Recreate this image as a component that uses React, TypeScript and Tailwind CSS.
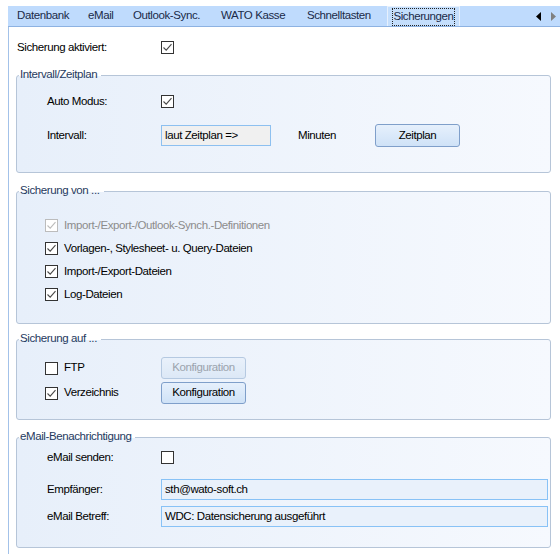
import React from "react";

function Check({ checked, disabled }: { checked?: boolean; disabled?: boolean }) {
  return (
    <span
      className={
        disabled
          ? "w-[13px] h-[13px] border border-[#bcbcbc] bg-white flex items-center justify-center shrink-0"
          : "w-[13px] h-[13px] border border-[#333333] bg-white flex items-center justify-center shrink-0"
      }
    >
      {checked && (
        <svg width="11" height="11" viewBox="0 0 11 11">
          <path
            d="M1.5 5.5 L4.2 8.2 L9.5 2.2"
            fill="none"
            stroke={disabled ? "#bcbcbc" : "#4a4a4a"}
            strokeWidth="1.1"
          />
        </svg>
      )}
    </span>
  );
}

function Button({ label, disabled, w }: { label: string; disabled?: boolean; w: string }) {
  return (
    <div
      className={
        (disabled
          ? "border-[#b5c9e1] bg-linear-to-b from-[#e9f1fb] to-[#dce8f6] text-[#9ba3ad] "
          : "border-[#7f9fca] bg-linear-to-b from-[#e6f0fc] to-[#cfe2f7] text-[#000000] ") +
        w +
        " h-full border rounded-[3px] flex items-center justify-center"
      }
    >
      {label}
    </div>
  );
}

function Tab({ label, w }: { label: string; w: string }) {
  return <div className={w + " flex items-center pl-[9px] text-[#1a2a48] whitespace-nowrap"}>{label}</div>;
}

export default function App() {
  return (
    <div className="w-[560px] h-[554px] bg-white overflow-hidden text-[11.5px] tracking-[-0.4px] text-[#000000] font-['Liberation_Sans',Arial,sans-serif]">
      <div className="pt-[6px] pl-[8px]">
        {/* tab strip */}
        <div className="h-[21px] bg-[#bfdbfd] border-b border-[#8db2e2] flex items-stretch">
          <Tab label="Datenbank" w="w-[71px]" />
          <Tab label="eMail" w="w-[45px]" />
          <Tab label="Outlook-Sync." w="w-[88px]" />
          <Tab label="WATO Kasse" w="w-[86px]" />
          <Tab label="Schnelltasten" w="w-[89px]" />
          <div className="w-[73px] border-l border-t border-r border-[#e6f0fd] bg-[#c4defc] flex items-stretch pt-[1px]">
            <div className="mx-[4px] flex-1 border border-dotted border-[#222222] flex items-center justify-center text-[#1a2a48]">
              Sicherungen
            </div>
          </div>
          <div className="ml-[76px] flex items-center gap-[10px]">
            <svg width="5" height="9" viewBox="0 0 5 9">
              <path d="M5 0 L0 4.5 L5 9 Z" fill="#000000" />
            </svg>
            <svg width="5" height="9" viewBox="0 0 5 9">
              <path d="M0 0 L5 4.5 L0 9 Z" fill="#808080" />
            </svg>
          </div>
        </div>

        {/* tab page */}
        <div className="h-[527px] border-l border-[#a3c2e9] pt-[14px]">
          <div className="h-[13px] flex items-center pl-[8px]">
            <span className="w-[144px]">Sicherung aktiviert:</span>
            <Check checked />
          </div>

          {/* Intervall/Zeitplan */}
          <fieldset className="mt-[13px] ml-[7px] w-[535px] h-[106px] min-w-0 border border-[#b6c5d8] rounded-[3px] bg-linear-to-r from-[#e7effa] to-[#f6f9fe]">
            <legend className="ml-[2px] pl-[1px] pr-[4px] pb-[3px] leading-[14px] text-[#1f3a60]">Intervall/Zeitplan</legend>
            <div className="pt-[11px] pl-[30px]">
              <div className="h-[13px] flex items-center">
                <span className="w-[114px]">Auto Modus:</span>
                <Check checked />
              </div>
              <div className="mt-[16px] h-[23px] flex items-center">
                <span className="w-[114px]">Intervall:</span>
                <div className="w-[110px] h-[21px] border border-[#8dc0f0] bg-[#f0f0f0] flex items-center pl-[3px]">
                  laut Zeitplan =&gt;
                </div>
                <span className="ml-[27px] w-[77px]">Minuten</span>
                <Button label="Zeitplan" w="w-[85px]" />
              </div>
            </div>
          </fieldset>

          {/* Sicherung von */}
          <fieldset className="mt-[10px] ml-[7px] w-[535px] h-[141px] min-w-0 border border-[#b6c5d8] rounded-[3px] bg-linear-to-r from-[#e7effa] to-[#f6f9fe]">
            <legend className="ml-[2px] pl-[1px] pr-[4px] pb-[3px] leading-[14px] text-[#1f3a60]">Sicherung von ...</legend>
            <div className="pt-[19px] pl-[28px] flex flex-col gap-[10px]">
              <div className="h-[13px] flex items-center gap-[6px] text-[#8c8c8c]">
                <Check checked disabled />
                <span>Import-/Export-/Outlook-Synch.-Definitionen</span>
              </div>
              <div className="h-[13px] flex items-center gap-[6px]">
                <Check checked />
                <span>Vorlagen-, Stylesheet- u. Query-Dateien</span>
              </div>
              <div className="h-[13px] flex items-center gap-[6px]">
                <Check checked />
                <span>Import-/Export-Dateien</span>
              </div>
              <div className="h-[13px] flex items-center gap-[6px]">
                <Check checked />
                <span>Log-Dateien</span>
              </div>
            </div>
          </fieldset>

          {/* Sicherung auf */}
          <fieldset className="mt-[7px] ml-[7px] w-[535px] h-[89px] min-w-0 border border-[#b6c5d8] rounded-[3px] bg-linear-to-r from-[#e7effa] to-[#f6f9fe]">
            <legend className="ml-[2px] pl-[1px] pr-[4px] pb-[3px] leading-[14px] text-[#1f3a60]">Sicherung auf ...</legend>
            <div className="pt-[9px] pl-[28px] flex flex-col gap-[3px]">
              <div className="h-[22px] flex items-center">
                <div className="w-[116px] flex items-center gap-[6px]">
                  <Check />
                  <span>FTP</span>
                </div>
                <Button label="Konfiguration" disabled w="w-[85px]" />
              </div>
              <div className="h-[22px] flex items-center">
                <div className="w-[116px] flex items-center gap-[6px]">
                  <Check checked />
                  <span>Verzeichnis</span>
                </div>
                <Button label="Konfiguration" w="w-[85px]" />
              </div>
            </div>
          </fieldset>

          {/* eMail-Benachrichtigung */}
          <fieldset className="mt-[9px] ml-[7px] w-[535px] h-[119px] min-w-0 border border-[#b6c5d8] rounded-[3px] bg-linear-to-r from-[#e7effa] to-[#f6f9fe]">
            <legend className="ml-[2px] pl-[1px] pr-[4px] pb-[3px] leading-[14px] text-[#1f3a60]">eMail-Benachrichtigung</legend>
            <div className="pt-[5px] pl-[30px]">
              <div className="h-[13px] flex items-center">
                <span className="w-[114px]">eMail senden:</span>
                <Check />
              </div>
              <div className="mt-[15px] h-[21px] flex items-center">
                <span className="w-[114px]">Empfänger:</span>
                <div className="w-[387px] h-full border border-[#88c2f6] bg-[#e9f1fb] flex items-center pl-[3px]">
                  sth@wato-soft.ch
                </div>
              </div>
              <div className="mt-[6px] h-[21px] flex items-center">
                <span className="w-[114px]">eMail Betreff:</span>
                <div className="w-[387px] h-full border border-[#88c2f6] bg-[#e9f1fb] flex items-center pl-[3px]">
                  WDC: Datensicherung ausgeführt
                </div>
              </div>
            </div>
          </fieldset>
        </div>
      </div>
    </div>
  );
}
